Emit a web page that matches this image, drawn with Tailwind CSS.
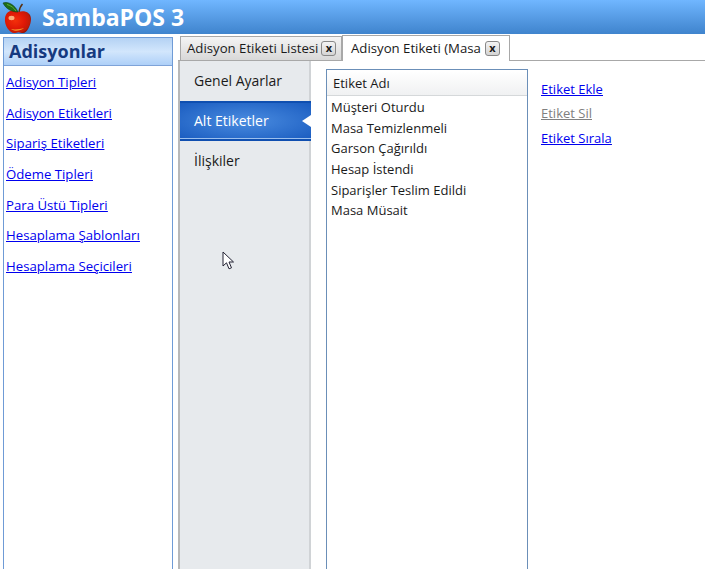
<!DOCTYPE html>
<html lang="tr">
<head>
    <meta charset="UTF-8">
    <title>SambaPOS 3</title>
    <script src="https://cdn.jsdelivr.net/npm/@tailwindcss/browser@4"></script>
</head>
<body class="bg-white font-['Open_Sans',sans-serif] text-[13px] text-[#1a1a1a]">
<div class="relative h-[569px] w-[705px] overflow-hidden">

    <!-- header -->
    <header class="flex h-[34px] items-center bg-gradient-to-b from-[#70b6ff] to-[#3f84cd] pl-[2px]">
        <svg width="30" height="33" viewBox="0 0 30 33" class="shrink-0">
            <defs>
                <radialGradient id="apple" cx="0.4" cy="0.45" r="0.65">
                    <stop offset="0" stop-color="#f4300a"/>
                    <stop offset="0.55" stop-color="#e01806"/>
                    <stop offset="0.85" stop-color="#c01a08"/>
                    <stop offset="1" stop-color="#7a0c04"/>
                </radialGradient>
            </defs>
            <path d="M16 11C12 8 4 9 3 17c-1 8 5 15 9 15 2 0 3-.8 4.500-.8s2.500.8 4.500.8c4 0 8-8 8-14 0-7-7-9-13-7z" fill="url(#apple)"/>
            <path d="M1 2c5-2 12 2 15 9C10 11 4 8 1 2z" fill="#1f6d1a" stroke="#0e3d10" stroke-width=".6"/>
            <path d="M5 3.500c4 1 7 3.500 9 6.500" stroke="#5fae3a" stroke-width="1" fill="none"/>
            <path d="M17 11c.5-3 1.500-6 3.500-8" stroke="#5a3010" stroke-width="1.500" fill="none"/>
            <ellipse cx="9.500" cy="17" rx="3" ry="2.200" fill="#ffd9a0" opacity=".75"/>
            <path d="M9 28c3 2.500 9 2.500 13-1-3 1-9 2-13 1z" fill="#ffb030" opacity=".8"/>
        </svg>
        <span class="ml-[10px] text-[23px] leading-none font-bold text-white">SambaPOS 3</span>
    </header>

    <div class="flex h-[535px]">
        <!-- left panel -->
        <aside class="mt-[3px] ml-[3px] w-[170px] shrink-0 border border-b-0 border-[#6f9bd6]">
            <div class="flex h-[28px] items-center border-b border-[#7ea3d8] bg-gradient-to-b from-[#b4d2f4] via-[#d2e6fc] to-[#aed0f8] pl-[5px] text-[18px] font-bold text-[#163a80]">Adisyonlar</div>
            <nav class="flex flex-col gap-[12.7px] pt-[7px] pl-[2px] text-[13.200px] text-[#0000ee] underline">
                <a class="leading-[18px]">Adisyon Tipleri</a>
                <a class="leading-[18px]">Adisyon Etiketleri</a>
                <a class="leading-[18px]">Sipariş Etiketleri</a>
                <a class="leading-[18px]">Ödeme Tipleri</a>
                <a class="leading-[18px]">Para Üstü Tipleri</a>
                <a class="leading-[18px]">Hesaplama Şablonları</a>
                <a class="leading-[18px]">Hesaplama Seçicileri</a>
            </nav>
        </aside>

        <!-- content -->
        <main class="ml-[5px] min-w-0 flex-1">
            <!-- tabs -->
            <div class="flex h-[27px] items-end border-b border-[#a8a8a8] pl-[2px] text-[13.200px]">
                <div class="flex h-[24px] w-[162px] items-center border border-b-0 border-[#a8a8a8] bg-gradient-to-b from-[#f4f4f4] to-[#d8d8d8] pl-[6px] whitespace-nowrap">
                    <span>Adisyon Etiketi Listesi</span>
                    <span class="ml-[3px] flex h-[15px] w-[15px] items-center justify-center rounded-[3px] border border-[#888] bg-gradient-to-b from-[#f4f4f4] to-[#d4d4d4] pb-[2px] text-[11px] leading-none font-bold">x</span>
                </div>
                <div class="relative -mb-px flex h-[26px] w-[168px] items-center border border-b-0 border-[#a8a8a8] bg-white pl-[8px] whitespace-nowrap">
                    <span>Adisyon Etiketi (Masa</span>
                    <span class="ml-[4px] flex h-[15px] w-[15px] items-center justify-center rounded-[3px] border border-[#888] bg-gradient-to-b from-[#f4f4f4] to-[#d4d4d4] pb-[2px] text-[11px] leading-none font-bold">x</span>
                </div>
            </div>

            <div class="flex h-[508px]">
                <!-- side tabs -->
                <div class="w-[133px] shrink-0 border-r-2 border-l-2 border-r-[#d0d3d6] border-l-[#b8b8b8] bg-[#e7eaed] text-[14px]">
                    <div class="flex h-[40px] items-center pb-[2px] pl-[14px]">Genel Ayarlar</div>
                    <div class="relative -mr-[2px] flex h-[40px] items-center border-t-2 border-b-2 border-[#0f4fb0] bg-[radial-gradient(ellipse_at_center,#4a8ce0,#1a5cc0)] pb-[2px] pl-[14px] text-white shadow-[inset_0_-1px_0_#9cc0ee]">
                        Alt Etiketler
                        <span class="absolute top-[12px] right-0 h-0 w-0 border-y-[6.500px] border-r-[9px] border-y-transparent border-r-white"></span>
                    </div>
                    <div class="flex h-[40px] items-center pb-[2px] pl-[14px]">İlişkiler</div>
                </div>

                <!-- list -->
                <div class="mt-[8px] ml-[15px] w-[202px] shrink-0 border border-b-0 border-[#6b8fb8]">
                    <div class="mt-[1px] flex h-[25px] items-center border-b border-[#d5d8da] bg-gradient-to-b from-white to-[#f0f1f2] pt-[1px] pl-[6px]">Etiket Adı</div>
                    <ul class="pt-[1.300px] pl-[4px]">
                        <li class="h-[20.600px] leading-[20.600px]">Müşteri Oturdu</li>
                        <li class="h-[20.600px] leading-[20.600px]">Masa Temizlenmeli</li>
                        <li class="h-[20.600px] leading-[20.600px]">Garson Çağırıldı</li>
                        <li class="h-[20.600px] leading-[20.600px]">Hesap İstendi</li>
                        <li class="h-[20.600px] leading-[20.600px]">Siparişler Teslim Edildi</li>
                        <li class="h-[20.600px] leading-[20.600px]">Masa Müsait</li>
                    </ul>
                </div>

                <!-- actions -->
                <div class="mt-[19px] ml-[13px] flex flex-col gap-[6.500px] underline">
                    <a class="leading-[18px] text-[#0000ee]">Etiket Ekle</a>
                    <a class="-mt-[.5px] leading-[18px] text-[#808080]">Etiket Sil</a>
                    <a class="leading-[18px] text-[#0000ee]">Etiket Sırala</a>
                </div>
            </div>
        </main>
    </div>

    <!-- mouse pointer -->
    <svg class="absolute top-[251px] left-[222px]" width="14" height="20" viewBox="0 0 14 20">
        <path d="M1 1v14l3.500-3.200 2.500 6 2.500-1-2.500-5.800h4.500z" fill="#fff" stroke="#223" stroke-width="1"/>
    </svg>
</div>
</body>
</html>
